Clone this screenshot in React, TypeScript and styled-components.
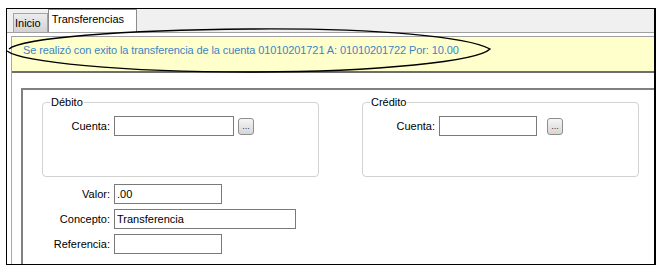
import styled, { createGlobalStyle } from "styled-components";

const GlobalStyle = createGlobalStyle`
  html, body {
    margin: 0;
    padding: 0;
    background: #ffffff;
  }
  body {
    font-family: "Liberation Sans", Arial, sans-serif;
    font-size: 11px;
    color: #000000;
  }
`;

const Screen = styled.div`
  position: relative;
  width: 668px;
  height: 276px;
  padding: 8px 0 0 6px;
  box-sizing: border-box;
`;

const Frame = styled.div`
  width: 650px;
  height: 257px;
  box-sizing: border-box;
  border: 1px solid #000000;
  border-right-width: 2px;
  display: flex;
  flex-direction: column;
  overflow: hidden;
`;

const TabStrip = styled.div`
  display: flex;
  align-items: flex-end;
  height: 23px;
  padding-left: 6px;
  background: #f0f0f0;
  border-bottom: 1px solid #a0a0a0;
`;

const Tab = styled.div<{ $active?: boolean }>`
  box-sizing: border-box;
  height: ${(p) => (p.$active ? "23px" : "19px")};
  padding: ${(p) => (p.$active ? "2px 12px 0 3px" : "2px 6px 0 1px")};
  line-height: 15px;
  border: 1px solid ${(p) => (p.$active ? "#8c8c8c" : "#a4a4a4")};
  border-bottom: none;
  background: ${(p) =>
    p.$active ? "#ffffff" : "linear-gradient(#ececec, #d2d2d2)"};
  color: #000000;
  white-space: nowrap;
`;

const Page = styled.div`
  flex: 1;
  display: flex;
  flex-direction: column;
  margin: 3px 0 0 4px;
  border-left: 1px solid #a8a8a8;
`;

const Banner = styled.div`
  height: 34px;
  box-sizing: content-box;
  padding: 0 0 0 11px;
  background: #ffffcc;
  border-top: 1px solid #a0a0a0;
  border-bottom: 2px solid #6e6e6e;
  color: #3b84c4;
  line-height: 13px;
  display: flex;
  align-items: flex-start;
  padding-top: 0;
`;

const BannerText = styled.span`
  margin-top: 7px;
  white-space: nowrap;
  letter-spacing: -0.1px;
`;

const Body = styled.div`
  flex: 1;
  display: flex;
  padding: 15px 0 0 9px;
`;

const Panel = styled.div`
  flex: 1;
  border-top: 2px solid #808080;
  border-left: 2px solid #808080;
  padding: 6px 0 0 19px;
`;

const Groups = styled.div`
  display: flex;
  gap: 43px;
`;

const GroupBox = styled.fieldset`
  box-sizing: border-box;
  width: 277px;
  height: 81px;
  margin: 0;
  padding: 0;
  border: 1px solid #d2d2d2;
  border-radius: 4px;
`;

const Legend = styled.legend`
  margin-left: 7px;
  padding: 0 1px;
  line-height: 13px;
  color: #000000;
`;

const Row = styled.div<{ $labelWidth: number; $buttonGap: number }>`
  display: grid;
  grid-template-columns: ${(p) => p.$labelWidth}px auto auto;
  column-gap: 4px;
  align-items: center;
  justify-content: start;
  margin-top: 7px;

  & > button {
    margin-left: ${(p) => p.$buttonGap - 4}px;
  }
`;

const Label = styled.label`
  text-align: right;
  white-space: nowrap;
`;

const TextInput = styled.input<{ $width: number }>`
  box-sizing: border-box;
  width: ${(p) => p.$width}px;
  height: 20px;
  margin: 0;
  padding: 0 2px;
  border: 1px solid #7a7a7a;
  background: #ffffff;
  font-family: "Liberation Sans", Arial, sans-serif;
  font-size: 11px;
  color: #000000;
  outline: none;
`;

const LookupButton = styled.button`
  box-sizing: border-box;
  width: 16px;
  height: 17px;
  margin: 0;
  padding: 0;
  border: 1px solid #8e8e8e;
  border-radius: 3px;
  background: linear-gradient(#f6f6f6, #d6d6d6);
  font-family: "Liberation Sans", Arial, sans-serif;
  font-size: 9px;
  line-height: 9px;
  color: #333333;
  display: flex;
  align-items: flex-end;
  justify-content: center;
  padding-bottom: 3px;
`;

const Fields = styled.div`
  display: grid;
  grid-template-columns: 68px auto;
  column-gap: 4px;
  row-gap: 5px;
  align-items: center;
  justify-content: start;
  margin-top: 7px;
`;

const Annotation = styled.svg`
  position: absolute;
  left: 0;
  top: 0;
  pointer-events: none;
`;

export default function App() {
  return (
    <Screen>
      <GlobalStyle />
      <Frame>
        <TabStrip>
          <Tab>Inicio</Tab>
          <Tab $active>Transferencias</Tab>
        </TabStrip>
        <Page>
          <Banner>
            <BannerText>
              Se realizó con exito la transferencia de la cuenta 01010201721 A:
              01010201722 Por: 10.00
            </BannerText>
          </Banner>
          <Body>
            <Panel>
              <Groups>
                <GroupBox>
                  <Legend>Débito</Legend>
                  <Row $labelWidth={67} $buttonGap={4}>
                    <Label>Cuenta:</Label>
                    <TextInput $width={120} />
                    <LookupButton>...</LookupButton>
                  </Row>
                </GroupBox>
                <GroupBox>
                  <Legend>Crédito</Legend>
                  <Row $labelWidth={72} $buttonGap={10}>
                    <Label>Cuenta:</Label>
                    <TextInput $width={98} />
                    <LookupButton>...</LookupButton>
                  </Row>
                </GroupBox>
              </Groups>
              <Fields>
                <Label>Valor:</Label>
                <TextInput $width={108} defaultValue=".00" />
                <Label>Concepto:</Label>
                <TextInput $width={182} defaultValue="Transferencia" />
                <Label>Referencia:</Label>
                <TextInput $width={108} />
              </Fields>
            </Panel>
          </Body>
        </Page>
      </Frame>
      <Annotation width="668" height="276" viewBox="0 0 668 276">
        <path
          d="M 9 49 C 22 38, 120 30, 250 29 C 380 28, 468 37, 490 49 C 478 61, 380 72, 250 72 C 120 72, 22 62, 7 51"
          fill="none"
          stroke="#000000"
          strokeWidth="1.4"
        />
      </Annotation>
    </Screen>
  );
}
